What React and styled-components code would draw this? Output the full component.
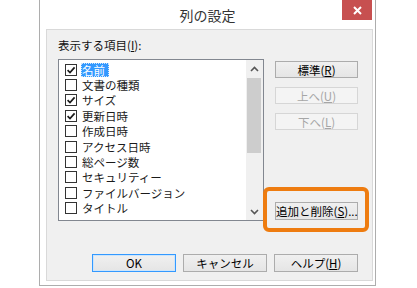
import styled, { createGlobalStyle } from 'styled-components';

const GlobalStyle = createGlobalStyle`
  body {
    margin: 0;
    background: #fff;
    font-family: "Noto Sans CJK JP", "Noto Sans", sans-serif;
  }
`;

const Page = styled.div`
  width: 417px;
  height: 288px;
  padding-left: 39px;
  box-sizing: border-box;
  overflow: hidden;
`;

const Window = styled.div`
  width: 337px;
  height: 286px;
  box-sizing: border-box;
  border: 1px solid #adadad;
  border-top: none;
  background: #fff;
  display: flex;
  flex-direction: column;
`;

const TitleBar = styled.div`
  height: 29px;
  flex: none;
  display: grid;
  grid-template-columns: 1fr auto 1fr;
`;

const Title = styled.div`
  grid-column: 2;
  align-self: center;
  font-size: 14px;
  line-height: 16px;
  color: #333;
  margin-top: 1px;
`;

const Close = styled.div`
  grid-column: 3;
  justify-self: end;
  width: 30px;
  height: 20px;
  margin-right: 3px;
  background: #c75050;
  display: flex;
  align-items: center;
  justify-content: center;
`;

const Panel = styled.div`
  flex: 1;
  margin: 0 2px 4px 6px;
  background: #f0f0f0;
  border: 1px solid #d9d9d9;
  padding: 8px 14px 8px 11px;
  display: flex;
  flex-direction: column;
`;

const Label = styled.div`
  font-size: 11.5px;
  line-height: 14px;
  color: #111;
  margin-bottom: 7px;
`;

const U = styled.span`
  text-decoration: underline;
  text-underline-offset: 1px;
`;

const Main = styled.div`
  display: flex;
  gap: 11px;
`;

const ListBox = styled.div`
  width: 206px;
  height: 162px;
  box-sizing: border-box;
  border: 1px solid #828790;
  background: #fff;
  display: flex;
`;

const Items = styled.div`
  flex: 1;
  padding: 2px 0 0 6px;
  overflow: hidden;
`;

const Item = styled.div`
  height: 15.4px;
  display: flex;
  align-items: center;
  gap: 5px;
  font-size: 11.5px;
  color: #1a1a1a;
  white-space: nowrap;
`;

const Box = styled.span`
  width: 12px;
  height: 12px;
  box-sizing: border-box;
  border: 1px solid #333;
  background: #fff;
  flex: none;
  display: flex;
  align-items: center;
  justify-content: center;
`;

const ItemText = styled.span`
  line-height: 14px;
  padding: ${p => (p.$selected ? '0 4px 0 1px' : '0')};
  margin-left: ${p => (p.$selected ? '-1px' : '0')};
  background: ${p => (p.$selected ? '#3399ff' : 'transparent')};
  color: ${p => (p.$selected ? '#fff' : 'inherit')};
  outline: ${p => (p.$selected ? '1px dotted #cfe6ff' : 'none')};
  outline-offset: -1px;
`;

const ScrollBar = styled.div`
  width: 17px;
  background: #f0f0f0;
  display: flex;
  flex-direction: column;
`;

const Arrow = styled.div`
  height: 17px;
  flex: none;
  display: flex;
  align-items: center;
  justify-content: center;
`;

const Track = styled.div`
  flex: 1;
  padding: 1px 2px 0 1px;
`;

const Thumb = styled.div`
  height: 75px;
  background: #cdcdcd;
`;

const Side = styled.div`
  width: 83px;
  padding-top: 2px;
  display: flex;
  flex-direction: column;
  gap: 9px;
`;

const Button = styled.button`
  width: ${p => p.$w || 83}px;
  height: ${p => p.$h || 17}px;
  box-sizing: border-box;
  padding: 0;
  font-family: inherit;
  font-size: 11.5px;
  line-height: 14px;
  color: ${p => (p.disabled ? '#a6a6a6' : '#000')};
  background: ${p => (p.disabled ? '#f4f4f4' : 'linear-gradient(#f0f0f0, #e5e5e5)')};
  border: 1px solid ${p => (p.disabled ? '#d6d6d6' : p.$default ? '#3399ff' : '#acacac')};
  box-shadow: ${p => (p.$default ? 'inset 0 0 0 1px #cde5fb' : 'none')};
  white-space: nowrap;
`;

const Highlight = styled.div`
  position: relative;
  margin-top: auto;
  margin-bottom: 1px;
  display: flex;

  &::after {
    content: '';
    position: absolute;
    inset: -15px -11px -12px -12px;
    border: 4px solid #ee7c10;
    border-radius: 6px;
  }
`;

const Footer = styled.div`
  margin-top: auto;
  display: flex;
  justify-content: flex-end;
  gap: 7px;
`;

const items = [
  { name: '名前', checked: true, selected: true },
  { name: '文書の種類' },
  { name: 'サイズ', checked: true },
  { name: '更新日時', checked: true },
  { name: '作成日時' },
  { name: 'アクセス日時' },
  { name: '総ページ数' },
  { name: 'セキュリティー' },
  { name: 'ファイルバージョン' },
  { name: 'タイトル' },
];

const Check = () => (
  <svg width="10" height="10" viewBox="0 0 10 10">
    <path d="M1.6 5.2 L4 7.6 L8.6 2.4" fill="none" stroke="#1a1a1a" strokeWidth="1.7" />
  </svg>
);

const Chevron = ({ down }) => (
  <svg width="9" height="6" viewBox="0 0 9 6">
    <path
      d={down ? 'M1 1 L4.5 4.5 L8 1' : 'M1 5 L4.5 1.5 L8 5'}
      fill="none"
      stroke="#555"
      strokeWidth="1.6"
    />
  </svg>
);

export default function App() {
  return (
    <>
      <GlobalStyle />
      <Page>
        <Window>
          <TitleBar>
            <Title>列の設定</Title>
            <Close>
              <svg width="9" height="9" viewBox="0 0 9 9">
                <path d="M1 1 L8 8 M8 1 L1 8" stroke="#fff" strokeWidth="2" />
              </svg>
            </Close>
          </TitleBar>
          <Panel>
            <Label>
              表示する項目(<U>I</U>):
            </Label>
            <Main>
              <ListBox>
                <Items>
                  {items.map(it => (
                    <Item key={it.name}>
                      <Box>{it.checked && <Check />}</Box>
                      <ItemText $selected={it.selected}>{it.name}</ItemText>
                    </Item>
                  ))}
                </Items>
                <ScrollBar>
                  <Arrow>
                    <Chevron />
                  </Arrow>
                  <Track>
                    <Thumb />
                  </Track>
                  <Arrow>
                    <Chevron down />
                  </Arrow>
                </ScrollBar>
              </ListBox>
              <Side>
                <Button>
                  標準(<U>R</U>)
                </Button>
                <Button disabled>
                  上へ(<U>U</U>)
                </Button>
                <Button disabled>
                  下へ(<U>L</U>)
                </Button>
                <Highlight>
                  <Button $h={18}>
                    追加と削除(<U>S</U>)...
                  </Button>
                </Highlight>
              </Side>
            </Main>
            <Footer>
              <Button $w={84} $h={18} $default>
                OK
              </Button>
              <Button $w={84} $h={18}>
                キャンセル
              </Button>
              <Button $w={84} $h={18}>
                ヘルプ(<U>H</U>)
              </Button>
            </Footer>
          </Panel>
        </Window>
      </Page>
    </>
  );
}
